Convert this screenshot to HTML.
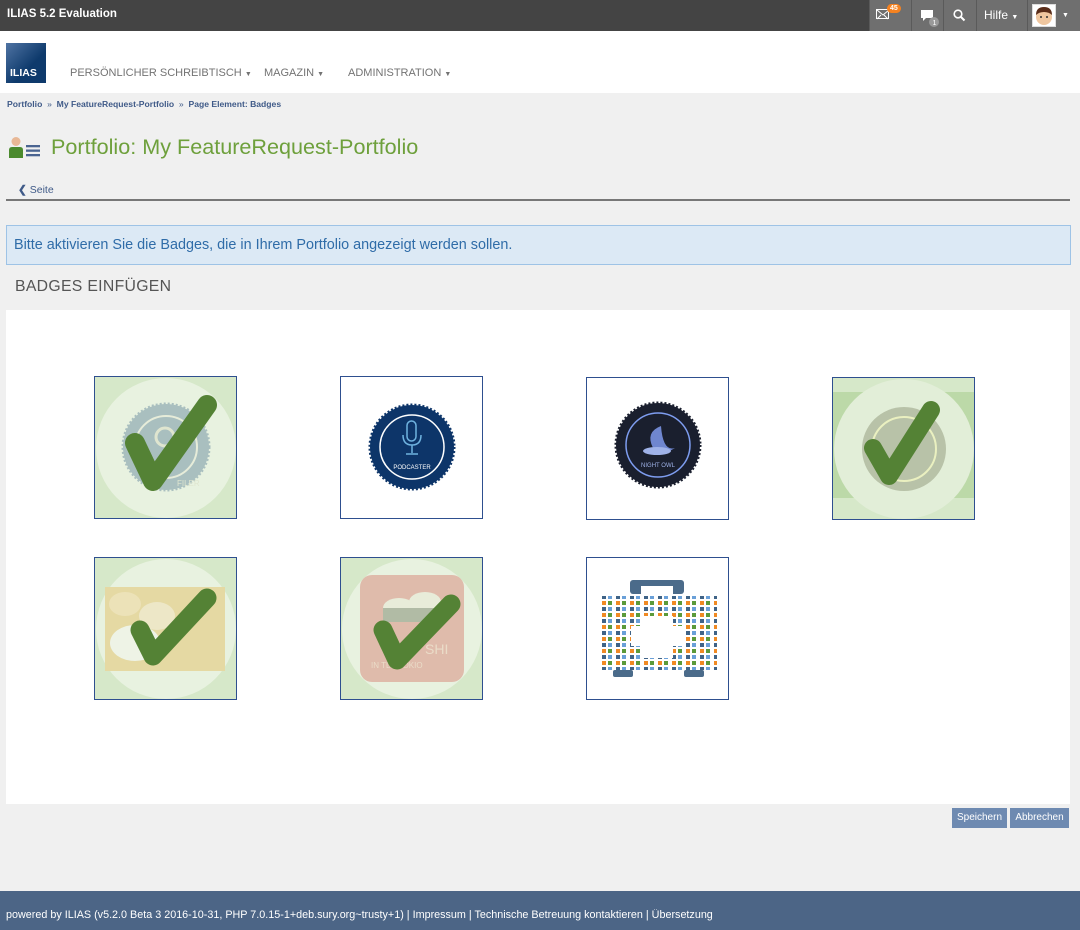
<!DOCTYPE html>
<html><head><meta charset="utf-8">
<style>
*{margin:0;padding:0;box-sizing:border-box}
body{width:1080px;height:930px;background:#f0f0f0;font-family:"Liberation Sans",sans-serif;position:relative;overflow:hidden}
.abs{position:absolute}
#top{left:0;top:0;width:1080px;height:31px;background:#444;}
#top .t{left:7px;top:8px;color:#fff;font-size:11.5px;font-weight:bold}
.tb{top:0;height:31px;background:#6f6f6f;border-left:1px solid #5a5a5a}
#hdr{left:0;top:31px;width:1080px;height:62px;background:#fff}
.nav{top:67px;font-size:11px;color:#737373;white-space:nowrap}
.crumb{top:99px;font-size:8.6px;color:#3f5a88;font-weight:bold;white-space:nowrap}
.badge{position:absolute;width:143px;height:143px;border:1px solid #2e4f8f;background:#fff;overflow:hidden}
.badge svg{position:absolute;left:0;top:0}
.btn{top:808px;height:20px;background:#6e8ab1;color:#fff;font-size:10px;text-align:center;line-height:20px}
</style></head><body>
<div id="top" class="abs"><div class="t abs">ILIAS 5.2 Evaluation</div></div>
<div class="abs tb" style="left:869px;width:42px"></div>
<div class="abs tb" style="left:911px;width:32px"></div>
<div class="abs tb" style="left:943px;width:33px"></div>
<div class="abs tb" style="left:976px;width:51px"></div>
<div class="abs tb" style="left:1027px;width:53px"></div>
<svg class="abs" style="left:876px;top:9px" width="14" height="11"><rect x="0.5" y="0.5" width="12" height="9" fill="none" stroke="#fff"/><path d="M1 1l6 5 6-5M1 10l4-4M12 10l-4-4" stroke="#fff" fill="none"/></svg>
<div class="abs" style="left:887px;top:4px;background:#f58220;color:#fff;font-size:7px;font-weight:bold;border-radius:6px;padding:1px 3px">45</div>
<svg class="abs" style="left:920px;top:9px" width="20" height="18"><path d="M1 1h12v8H6l-3 3V9H1z" fill="#fff"/><circle cx="14" cy="13" r="5" fill="#999"/><text x="12.5" y="16" font-size="7" fill="#fff" font-family="Liberation Sans">1</text></svg>
<svg class="abs" style="left:953px;top:9px" width="13" height="13"><circle cx="5" cy="5" r="3.8" fill="none" stroke="#fff" stroke-width="1.6"/><path d="M8 8l3.5 3.5" stroke="#fff" stroke-width="2"/></svg>
<div class="abs" style="left:984px;top:8px;color:#fff;font-size:12px">Hilfe <span style="font-size:7px">▼</span></div>
<div class="abs" style="left:1032px;top:4px;width:24px;height:23px;background:#fff;border:1px solid #ddd"><svg width="22" height="21"><circle cx="11" cy="12" r="8" fill="#f0c7a0"/><path d="M3 10q0-8 8-8t8 8q-3-3-8-3t-8 3z" fill="#5a2d1a"/><circle cx="8" cy="12" r="1" fill="#333"/><circle cx="14" cy="12" r="1" fill="#333"/></svg></div>
<div class="abs" style="left:1062px;top:12px;color:#fff;font-size:7px">▼</div>
<div id="hdr" class="abs"></div>
<div class="abs" style="left:6px;top:43px;width:40px;height:40px;background:linear-gradient(135deg,#4f73a3,#0e3a6c 60%);"><div class="abs" style="left:4px;top:24px;color:#fff;font-size:10.5px;font-weight:bold">ILIAS</div></div>
<div class="abs nav" style="left:70px">PERSÖNLICHER SCHREIBTISCH <span style="font-size:7px">▼</span></div>
<div class="abs nav" style="left:264px">MAGAZIN <span style="font-size:7px">▼</span></div>
<div class="abs nav" style="left:348px">ADMINISTRATION <span style="font-size:7px">▼</span></div>
<div class="abs crumb" style="left:7px">Portfolio &nbsp;<span style="font-weight:normal">»</span>&nbsp; My FeatureRequest-Portfolio &nbsp;<span style="font-weight:normal">»</span>&nbsp; Page Element: Badges</div>
<svg class="abs" style="left:8px;top:136px" width="34" height="24"><circle cx="8" cy="5.5" r="4.5" fill="#e8b896"/><path d="M1 22v-8q0-3 3-3h8q3 0 3 3v8z" fill="#4b8a2e"/><rect x="18" y="9" width="14" height="2.3" fill="#4a6491"/><rect x="18" y="13.5" width="14" height="2.3" fill="#4a6491"/><rect x="18" y="18" width="14" height="2.3" fill="#4a6491"/></svg>
<div class="abs" style="left:51px;top:134px;color:#6ea03c;font-size:21.6px;white-space:nowrap">Portfolio: My FeatureRequest-Portfolio</div>
<div class="abs" style="left:18px;top:184px;color:#3f5a88;font-size:10.5px"><b>❮</b> Seite</div>
<div class="abs" style="left:6px;top:199px;width:1064px;height:2px;background:#777"></div>
<div class="abs" style="left:6px;top:225px;width:1065px;height:40px;background:#dce9f5;border:1px solid #9ec3e6"></div>
<div class="abs" style="left:14px;top:237px;color:#2f6ca8;font-size:14.4px;white-space:nowrap">Bitte aktivieren Sie die Badges, die in Ihrem Portfolio angezeigt werden sollen.</div>
<div class="abs" style="left:15px;top:278px;color:#555;font-size:15.8px;letter-spacing:.3px">BADGES EINFÜGEN</div>
<div class="abs" style="left:6px;top:310px;width:1064px;height:494px;background:#fff"></div>

<div class="badge" style="left:94px;top:376px;background:#d6e8c9">
<svg width="143" height="143"><circle cx="71" cy="71" r="70" fill="#e8f2e0"/><circle cx="71" cy="70" r="43" fill="#a9bfbf" stroke="#a9bfbf" stroke-width="3" stroke-dasharray="2 2"/><circle cx="71" cy="70" r="31" fill="none" stroke="#e6ecd9" stroke-width="2"/><circle cx="70" cy="60" r="9" fill="none" stroke="#dfe5cf" stroke-width="3"/><text x="82" y="109" font-size="8" fill="#dfe5cf" font-family="Liberation Sans">FILER</text>
<path d="M40 66 L58 104 L112 28" fill="none" stroke="#548235" stroke-width="20" stroke-linecap="round" stroke-linejoin="round"/></svg></div>
<div class="badge" style="left:340px;top:376px">
<svg width="143" height="143"><circle cx="71" cy="70" r="42" fill="#0d3569" stroke="#0d3569" stroke-width="3" stroke-dasharray="2 2"/><circle cx="71" cy="70" r="32" fill="none" stroke="#fff" stroke-width="1.5"/><rect x="66" y="44" width="9" height="20" rx="4.5" fill="none" stroke="#6fb3e0" stroke-width="1.5"/><path d="M62 58q0 10 9 10t9-10M71 68v8M65 77h12" fill="none" stroke="#6fb3e0" stroke-width="1.5"/><text x="71" y="92" font-size="6" fill="#fff" text-anchor="middle" font-family="Liberation Sans">PODCASTER</text></svg></div>
<div class="badge" style="left:586px;top:377px">
<svg width="143" height="143"><circle cx="71" cy="67" r="42" fill="#1a1f2e" stroke="#1a1f2e" stroke-width="3" stroke-dasharray="2 2"/><circle cx="71" cy="67" r="32" fill="none" stroke="#7e9df0" stroke-width="1.5"/><path d="M74 48q-16 6-8 22 6 10 22 0-12 4-14-22z" fill="#6f86cf"/><ellipse cx="70" cy="73" rx="14" ry="4" fill="#9fb2e8"/><text x="71" y="89" font-size="6" fill="#9fb2e8" text-anchor="middle" font-family="Liberation Sans">NIGHT OWL</text></svg></div>
<div class="badge" style="left:832px;top:377px;background:#d6e8c9">
<svg width="143" height="143"><rect y="14" width="143" height="106" fill="#bcd9a8"/><circle cx="71" cy="71" r="70" fill="#e2eed8"/><circle cx="71" cy="71" r="42" fill="#b8c2a8"/><circle cx="71" cy="71" r="32" fill="none" stroke="#eaf0c0" stroke-width="2"/><path d="M40 70 L56 98 L98 32" fill="none" stroke="#548235" stroke-width="18" stroke-linecap="round" stroke-linejoin="round"/></svg></div>
<div class="badge" style="left:94px;top:557px;background:#d6e8c9">
<svg width="143" height="143"><circle cx="71" cy="71" r="70" fill="#e8f2e0"/><rect x="10" y="29" width="120" height="84" fill="#e5d9a3"/><ellipse cx="30" cy="46" rx="16" ry="12" fill="#ece2b8"/><ellipse cx="62" cy="58" rx="18" ry="14" fill="#ede7c7"/><ellipse cx="40" cy="85" rx="25" ry="18" fill="#eef3e6"/>
<path d="M45 72 L58 98 L112 40" fill="none" stroke="#548235" stroke-width="19" stroke-linecap="round" stroke-linejoin="round"/></svg></div>
<div class="badge" style="left:340px;top:557px;background:#d6e8c9">
<svg width="143" height="143"><circle cx="71" cy="71" r="70" fill="#e8f2e0"/><rect x="19" y="17" width="104" height="107" rx="12" fill="#dfbbab"/><ellipse cx="58" cy="50" rx="16" ry="10" fill="#e8ecd9"/><ellipse cx="84" cy="44" rx="16" ry="10" fill="#e8ecd9"/><rect x="42" y="50" width="58" height="14" fill="#b1bba5"/><text x="84" y="96" font-size="14" fill="#eadcc8" font-family="Liberation Sans">SHI</text><text x="30" y="110" font-size="8" fill="#eadcc8" font-family="Liberation Sans">IN     TLE TOKIO</text>
<path d="M42 72 L56 102 L110 46" fill="none" stroke="#548235" stroke-width="19" stroke-linecap="round" stroke-linejoin="round"/></svg></div>
<div class="badge" style="left:586px;top:557px">
<svg width="143" height="143"><rect x="43" y="22" width="54" height="14" rx="3" fill="#4b6b8a"/><rect x="54" y="28" width="32" height="8" fill="#fff"/>
<defs><pattern id="pt" width="14" height="12" patternUnits="userSpaceOnUse"><rect x="1" y="1" width="4" height="4" fill="#3f6387"/><rect x="7" y="1" width="4" height="4" fill="#6aa0d8"/><rect x="1" y="7" width="4" height="4" fill="#f08a24"/><rect x="7" y="7" width="4" height="4" fill="#5b9a3a"/></pattern></defs>
<rect x="12" y="38" width="118" height="74" fill="url(#pt)"/>
<rect x="56" y="58" width="30" height="42" fill="#fff"/><rect x="44" y="68" width="54" height="20" fill="#fff"/>
<rect x="26" y="112" width="20" height="7" rx="2" fill="#4b6b8a"/><rect x="97" y="112" width="20" height="7" rx="2" fill="#4b6b8a"/></svg></div>

<div class="abs btn" style="left:952px;width:55px">Speichern</div>
<div class="abs btn" style="left:1010px;width:59px">Abbrechen</div>
<div class="abs" style="left:0;top:891px;width:1080px;height:39px;background:#4c6586"></div>
<div class="abs" style="left:6px;top:909px;color:#fff;font-size:11px;transform:scaleX(.98);transform-origin:left;white-space:nowrap">powered by ILIAS (v5.2.0 Beta 3 2016-10-31, PHP 7.0.15-1+deb.sury.org~trusty+1) | Impressum | Technische Betreuung kontaktieren | Übersetzung</div>
</body></html>
